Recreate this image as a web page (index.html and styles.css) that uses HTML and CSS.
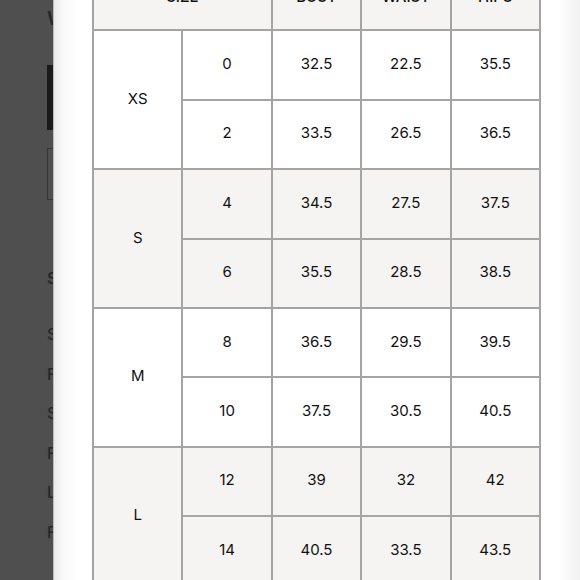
FILE: index.html
```html
<!DOCTYPE html>
<html lang="en">
<head>
<meta charset="utf-8">
<title>Size Chart</title>
<link rel="stylesheet" href="styles.css">
</head>
<body>
<div class="screen">
  <div class="backdrop">
    <div class="bg-title">W</div>
    <div class="bg-btn"></div>
    <div class="bg-input"></div>
    <div class="bg-head">S</div>
    <ul class="bg-list">
      <li>S</li>
      <li>F</li>
      <li>S</li>
      <li>F</li>
      <li>L</li>
      <li>F</li>
    </ul>
  </div>
  <div class="modal">
    <table class="chart">
      <thead>
        <tr><th colspan="2">SIZE</th><th>BUST</th><th>WAIST</th><th>HIPS</th></tr>
      </thead>
      <tbody class="grp">
        <tr><td rowspan="2">XS</td><td>0</td><td>32.5</td><td>22.5</td><td>35.5</td></tr>
        <tr><td>2</td><td>33.5</td><td>26.5</td><td>36.5</td></tr>
      </tbody>
      <tbody class="grp alt">
        <tr><td rowspan="2">S</td><td>4</td><td>34.5</td><td>27.5</td><td>37.5</td></tr>
        <tr><td>6</td><td>35.5</td><td>28.5</td><td>38.5</td></tr>
      </tbody>
      <tbody class="grp">
        <tr><td rowspan="2">M</td><td>8</td><td>36.5</td><td>29.5</td><td>39.5</td></tr>
        <tr><td>10</td><td>37.5</td><td>30.5</td><td>40.5</td></tr>
      </tbody>
      <tbody class="grp alt">
        <tr><td rowspan="2">L</td><td>12</td><td>39</td><td>32</td><td>42</td></tr>
        <tr><td>14</td><td>40.5</td><td>33.5</td><td>43.5</td></tr>
      </tbody>
    </table>
  </div>
</div>
</body>
</html>
```
FILE: styles.css
```css
* { box-sizing: border-box; }
html, body { margin: 0; padding: 0; }
body {
  width: 580px;
  height: 580px;
  overflow: hidden;
  font-family: Inter, "Liberation Sans", sans-serif;
  background: #4f4f4f;
}
.screen {
  display: flex;
  height: 580px;
}
.backdrop {
  width: 53px;
  flex: none;
  overflow: hidden;
  background: #4f4f4f;
  padding-left: 47px;
  color: #262626;
  font-weight: 600;
}
.bg-title {
  height: 65px;
  padding-top: 9px;
  font-size: 19px;
  line-height: 20px;
}
.bg-btn {
  width: 60px;
  height: 65px;
  background: #1b1b1b;
}
.bg-input {
  width: 60px;
  height: 52px;
  margin-top: 18px;
  border: 1px solid #363636;
}
.bg-head {
  margin-top: 68px;
  font-size: 16px;
  line-height: 20px;
  height: 20px;
}
.bg-list {
  list-style: none;
  margin: 27px 0 0;
  padding: 0;
  font-size: 16px;
  font-weight: 500;
}
.bg-list li {
  height: 39.5px;
  line-height: 39.5px;
}
.modal {
  flex: 1;
  height: 580px;
  overflow: hidden;
  background: linear-gradient(to right, #e9e9e9 0, #f8f8f8 8px, #ffffff 22px, #ffffff calc(100% - 22px), #f1f1f1 100%);
  border-left: 1px solid #bdbdbd;
  padding-left: 38px;
}
.chart {
  margin-top: -40px;
  width: 449px;
  border-collapse: collapse;
  table-layout: fixed;
  font-size: 15px;
  color: #111111;
}
.chart th, .chart td {
  border: 2px solid #a4a4a4;
  height: 69.4px;
  text-align: center;
  vertical-align: middle;
  font-weight: 400;
}
.chart td {
  padding: 0 0 3px;
}
.chart thead th {
  background: #f5f4f2;
  font-weight: 500;
  padding: 2px 0 0;
}
.grp td { background: #ffffff; }
.grp.alt td { background: #f5f4f2; }
```
